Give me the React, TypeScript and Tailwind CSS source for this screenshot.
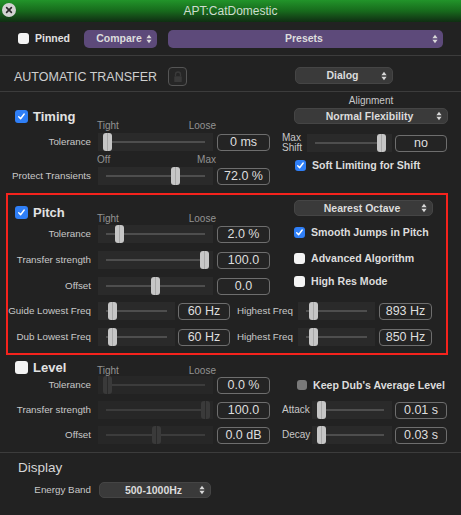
import React from "react";

const UpDown = () => (
  <svg width="6" height="10" viewBox="0 0 6 10" className="shrink-0">
    <path d="M3 0.8 L5.6 4.2 H0.4Z M3 9.2 L5.6 5.8 H0.4Z" fill="#d8d8d8" />
  </svg>
);

const Check = ({ size = "w-[13px] h-[13px]" }: { size?: string }) => (
  <div className={`${size} rounded-[3px] bg-[#2f7ff7] flex items-center justify-center shrink-0`}>
    <svg viewBox="0 0 12 12" className="w-[9px] h-[9px]">
      <path d="M2.3 6.4 L4.8 9 L9.6 2.6" stroke="white" strokeWidth="1.9" fill="none" strokeLinecap="round" strokeLinejoin="round" />
    </svg>
  </div>
);

const Box = ({ size = "w-[13px] h-[13px]" }: { size?: string }) => (
  <div className={`${size} rounded-[3px] bg-[#f4f4f4] shrink-0`} />
);

function Slider({ w, thumb, dim }: { w: string; thumb: string; dim?: boolean }) {
  return (
    <div className={`relative h-[18px] shrink-0 ${dim ? "bg-[#272727]" : "bg-[#2a2a2a]"} ${w}`}>
      <div className={`absolute left-[8px] right-[8px] top-[8px] h-[2px] ${dim ? "bg-[#3c3c3c]" : "bg-[#4e4e4e]"}`} />
      <div
        className={`absolute top-0 h-[18px] w-[9px] rounded-[3px] flex justify-center ${thumb} ${dim ? "bg-[#3a3a3a]" : "bg-[#c6c6c6]"}`}
      >
        <div className={`w-px h-full ${dim ? "bg-[#2a2a2a]" : "bg-[#a8a8a8]"}`} />
      </div>
    </div>
  );
}

function Val({ w, children, cls = "" }: { w: string; children: React.ReactNode; cls?: string }) {
  return (
    <div
      className={`h-[17px] ${w} ${cls} shrink-0 border border-[#6e6e6e] rounded-[4px] bg-[#242424] flex items-center justify-center text-[12.5px] leading-none text-[#dedede] whitespace-nowrap`}
    >
      {children}
    </div>
  );
}

function Label({ children, w = "w-[83px]" }: { children: React.ReactNode; w?: string }) {
  return (
    <div className={`${w} shrink-0 flex justify-end whitespace-nowrap text-[9.8px] leading-none text-[#c8c8c8]`}>
      {children}
    </div>
  );
}

function Row({ label, thumb, value, dim }: { label: string; thumb: string; value: string; dim?: boolean }) {
  return (
    <div className="flex items-center h-[18px]">
      <Label>{label}</Label>
      <div className="ml-[7px]">
        <Slider w="w-[115px]" thumb={thumb} dim={dim} />
      </div>
      <Val w="w-[53px]" cls="ml-[4px]">
        {value}
      </Val>
    </div>
  );
}

function Dropdown({ w, h = "h-[16px]", children, purple }: { w: string; h?: string; children: React.ReactNode; purple?: boolean }) {
  return (
    <div
      className={`${w} ${h} shrink-0 rounded-[5px] flex items-center pl-[8px] pr-[5px] ${
        purple ? "bg-[#5d4a7a]" : "bg-[#3a3a3a] border border-[#454545]"
      }`}
    >
      <div className="flex-1 text-center text-[10.5px] font-bold text-[#dcdcdc] leading-none whitespace-nowrap">{children}</div>
      <UpDown />
    </div>
  );
}

function Header({ checked, title, h }: { checked: boolean; title: string; h: string }) {
  return (
    <div className={`w-[89px] pl-[7px] flex items-center gap-[5px] ${h}`}>
      {checked ? <Check /> : <Box />}
      <span className="text-[13px] font-bold text-[#e2e2e2] leading-none">{title}</span>
    </div>
  );
}

function TightLoose({ a, b, cls = "" }: { a: string; b: string; cls?: string }) {
  return (
    <div className={`w-[119px] flex justify-between text-[10px] leading-[10px] text-[#939393] ${cls}`}>
      <span>{a}</span>
      <span>{b}</span>
    </div>
  );
}

function Opt({ checked, label, box = "w-[11px] h-[11px]" }: { checked: boolean; label: string; box?: string }) {
  return (
    <div className="flex items-center h-[12px] gap-[6px]">
      {checked ? <Check size={box} /> : <Box size={box} />}
      <span className="text-[10.6px] font-bold text-[#dcdcdc] leading-none whitespace-nowrap">{label}</span>
    </div>
  );
}

export default function App() {
  return (
    <div className="w-[461px] h-[515px] bg-[#222222] overflow-hidden font-['Liberation_Sans',Arial,sans-serif]">
      {/* Title bar */}
      <div className="relative h-[22px] bg-gradient-to-b from-[#22942a] via-[#176a1c] to-[#0f2e12] flex items-center justify-center">
        <div className="absolute left-[2px] top-[3px] w-[14px] h-[14px] rounded-full bg-[#d2d2d2] flex items-center justify-center">
          <svg viewBox="0 0 10 10" className="w-[8px] h-[8px]">
            <path d="M2 2 L8 8 M8 2 L2 8" stroke="#2a2a2a" strokeWidth="2" strokeLinecap="round" />
          </svg>
        </div>
        <span className="text-[12px] text-[#cfdccf] leading-none">APT:CatDomestic</span>
      </div>

      {/* Row 1 */}
      <div className="h-[33px] flex items-center pl-[18px]">
        <div className="w-[66px] flex items-center gap-[6px]">
          <Box size="w-[11px] h-[11px]" />
          <span className="text-[10.5px] font-bold text-[#e0e0e0] leading-none">Pinned</span>
        </div>
        <Dropdown w="w-[73px]" h="h-[18px]" purple>
          Compare
        </Dropdown>
        <div className="ml-[11px]">
          <Dropdown w="w-[275px]" h="h-[18px]" purple>
            Presets
          </Dropdown>
        </div>
      </div>
      <div className="h-px bg-[#3c3c3c]" />

      {/* Row 2 */}
      <div className="h-[35px] flex items-start pt-[11px] pl-[14px]">
        <div className="w-[154px] h-[20px] flex items-center text-[12.5px] text-[#cfcfcf] leading-none">AUTOMATIC TRANSFER</div>
        <div className="w-[19px] h-[19px] rounded-[4px] border border-[#555555] bg-[#262626] flex items-center justify-center">
          <svg viewBox="0 0 12 14" className="w-[10px] h-[12px]">
            <path d="M3 6 V4 a3 3 0 0 1 6 0 V6" stroke="#3a3a3a" strokeWidth="1.6" fill="none" />
            <rect x="1.5" y="6" width="9" height="7" rx="1" fill="#3a3a3a" />
          </svg>
        </div>
        <div className="ml-[108px]">
          <Dropdown w="w-[98px]" h="h-[17px]">
            Dialog
          </Dropdown>
        </div>
      </div>
      <div className="h-px bg-[#3c3c3c]" />

      {/* Timing */}
      <div className="mx-[6px] w-[442px] border-2 border-transparent flex">
        <div className="w-[262px] pt-[14px]">
          <div className="flex h-[23px]">
            <Header checked title="Timing" h="h-[16px]" />
            <TightLoose a="Tight" b="Loose" cls="self-end" />
          </div>
          <div className="mt-[2px]">
            <Row label="Tolerance" thumb="left-[5px]" value="0 ms" />
          </div>
          <div className="mt-[4px] ml-[89px]">
            <TightLoose a="Off" b="Max" />
          </div>
          <div className="mt-[2px]">
            <Row label="Protect Transients" thumb="left-[73px]" value="72.0 %" />
          </div>
        </div>
        <div className="ml-[12px] w-[166px] pt-[2px] shrink-0">
          <div className="ml-[12px] w-[154px] h-[10px] text-center text-[10px] leading-[10px] text-[#c8c8c8]">Alignment</div>
          <div className="ml-[12px] mt-[2px]">
            <Dropdown w="w-[154px]">Normal Flexibility</Dropdown>
          </div>
          <div className="mt-[9px] h-[20px] flex items-center">
            <div className="w-[25px] text-[10px] leading-[10px] text-[#c8c8c8]">
              Max
              <br />
              Shift
            </div>
            <Slider w="w-[85px]" thumb="left-[70px]" />
            <Val w="w-[52px]" cls="ml-[3px]">
              no
            </Val>
          </div>
          <div className="mt-[6px] ml-[13px]">
            <Opt checked label="Soft Limiting for Shift" />
          </div>
        </div>
      </div>

      {/* Pitch */}
      <div className="mt-[6px] mx-[6px] w-[442px] border-2 border-[#f5231d] pb-[7px]">
        <div className="flex">
          <div className="w-[262px] pt-[9px]">
            <div className="flex h-[20px]">
              <Header checked title="Pitch" h="h-[17px]" />
              <TightLoose a="Tight" b="Loose" cls="self-end" />
            </div>
            <div className="mt-[1px] flex flex-col gap-[8px]">
              <Row label="Tolerance" thumb="left-[17px]" value="2.0 %" />
              <Row label="Transfer strength" thumb="left-[102px]" value="100.0" />
              <Row label="Offset" thumb="left-[53px]" value="0.0" />
            </div>
          </div>
          <div className="ml-[24px] pt-[5px]">
            <Dropdown w="w-[139px]">Nearest Octave</Dropdown>
            <div className="mt-[10px]">
              <Opt checked label="Smooth Jumps in Pitch" />
            </div>
            <div className="mt-[14px]">
              <Opt checked={false} label="Advanced Algorithm" />
            </div>
            <div className="mt-[11px]">
              <Opt checked={false} label="High Res Mode" />
            </div>
          </div>
        </div>
        <div className="mt-[7px] flex flex-col gap-[8px]">
          {[
            ["Guide Lowest Freq", "60 Hz", "893 Hz"],
            ["Dub Lowest Freq", "60 Hz", "850 Hz"],
          ].map(([l, a, b]) => (
            <div key={l} className="flex items-center h-[18px]">
              <Label>{l}</Label>
              <div className="ml-[7px]">
                <Slider w="w-[77px]" thumb="left-[10px]" />
              </div>
              <Val w="w-[52px]" cls="ml-[3px]">
                {a}
              </Val>
              <Label w="w-[60px] ml-[3px]">Highest Freq</Label>
              <div className="ml-[5px]">
                <Slider w="w-[77px]" thumb="left-[11px]" />
              </div>
              <Val w="w-[53px]" cls="ml-[4px]">
                {b}
              </Val>
            </div>
          ))}
        </div>
      </div>

      {/* Level */}
      <div className="mx-[6px] w-[442px] border-2 border-transparent pt-[3px]">
        <div className="flex h-[16px]">
          <Header checked={false} title="Level" h="h-[14px]" />
          <TightLoose a="Tight" b="Loose" cls="self-end" />
        </div>
        <div className="flex">
          <div className="w-[262px] flex flex-col gap-[7px]">
            <Row label="Tolerance" thumb="left-[5px]" value="0.0 %" dim />
            <Row label="Transfer strength" thumb="left-[103px]" value="100.0" dim />
            <Row label="Offset" thumb="left-[54px]" value="0.0 dB" dim />
          </div>
          <div className="ml-[12px] flex flex-col gap-[7px]">
            <div className="h-[18px] flex items-center ml-[15px] gap-[6px]">
              <div className="w-[10px] h-[10px] rounded-[3px] bg-[#7a7a7a] shrink-0" />
              <span className="text-[10.6px] font-bold text-[#dcdcdc] leading-none whitespace-nowrap">Keep Dub's Average Level</span>
            </div>
            {[
              ["Attack", "0.01 s"],
              ["Decay", "0.03 s"],
            ].map(([l, v]) => (
              <div key={l} className="h-[18px] flex items-center">
                <div className="w-[30px] text-[10px] leading-none text-[#c8c8c8]">{l}</div>
                <Slider w="w-[80px]" thumb="left-[5px]" />
                <Val w="w-[52px]" cls="ml-[3px]">
                  {v}
                </Val>
              </div>
            ))}
          </div>
        </div>
      </div>
      <div className="mt-[6px] h-px bg-[#3c3c3c]" />

      {/* Display */}
      <div className="mt-[7px] pl-[18px] h-[16px] flex items-center text-[13.5px] text-[#d6d6d6] leading-none">Display</div>
      <div className="mt-[6px] flex items-center">
        <Label w="w-[91px]">Energy Band</Label>
        <div className="ml-[8px]">
          <Dropdown w="w-[112px]">500-1000Hz</Dropdown>
        </div>
      </div>
    </div>
  );
}
